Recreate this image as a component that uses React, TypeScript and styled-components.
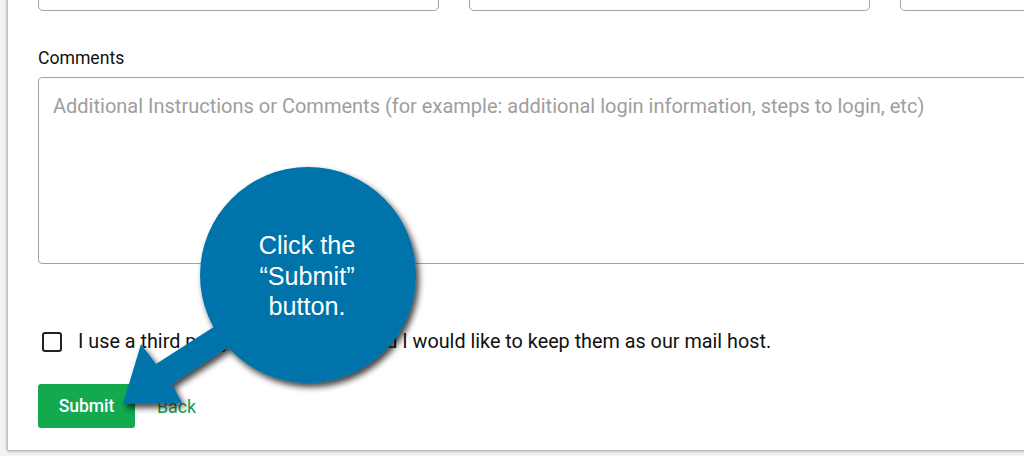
import styled, { createGlobalStyle } from "styled-components";

const GlobalStyle = createGlobalStyle`
  html, body {
    margin: 0;
    padding: 0;
    background: #f3f3f3;
  }
  body {
    font-family: Roboto, "Liberation Sans", Arial, sans-serif;
  }
`;

const PageStyled = styled.div`
  position: relative;
  width: 1024px;
  height: 456px;
  overflow: hidden;
`;

const CardStyled = styled.div`
  margin: -30px 0 0 8px;
  width: 1100px;
  padding: 0 0 22px 30px;
  box-sizing: border-box;
  background: #fff;
  box-shadow: -1px 1px 3px rgba(0, 0, 0, 0.35);
`;

const FieldRowStyled = styled.div`
  display: grid;
  grid-template-columns: 401px 401px 401px;
  column-gap: 30px;
`;

const InputStyled = styled.div`
  height: 41px;
  border: 1px solid #a3a3a3;
  border-radius: 5px;
  box-sizing: border-box;
`;

const LabelStyled = styled.div`
  margin-top: 36px;
  font-size: 17.6px;
  line-height: 22px;
  color: #111;
`;

const TextAreaStyled = styled.div`
  margin-top: 8px;
  height: 187px;
  border: 1px solid #a3a3a3;
  border-radius: 4px;
  box-sizing: border-box;
  padding: 15px 14px;
  font-size: 20px;
  line-height: 26px;
  color: #9e9e9e;
`;

const CheckRowStyled = styled.div`
  margin-top: 66px;
  display: flex;
  align-items: center;
  gap: 16px;
  padding-left: 4px;
  font-size: 19.8px;
  color: #111;
`;

const CheckBoxStyled = styled.span`
  width: 20px;
  height: 20px;
  border: 2.5px solid #222;
  border-radius: 3px;
  box-sizing: border-box;
`;

const ActionsStyled = styled.div`
  margin-top: 31px;
  display: flex;
  align-items: center;
  gap: 22px;
`;

const SubmitStyled = styled.button`
  width: 97px;
  height: 44px;
  border: none;
  border-radius: 3px;
  background: #12a94f;
  color: #fff;
  font-family: Roboto, "Liberation Sans", sans-serif;
  font-size: 17.5px;
  font-weight: 500;
`;

const BackStyled = styled.a`
  color: #14a04c;
  font-size: 17.8px;
  text-decoration: none;
`;

const CalloutStyled = styled.div`
  position: absolute;
  left: 0;
  top: 0;
  width: 1024px;
  height: 456px;
  pointer-events: none;
`;

const BubbleTextStyled = styled.div`
  position: absolute;
  left: 232px;
  top: 230px;
  width: 150px;
  text-align: center;
  font-family: "Liberation Sans", Arial, sans-serif;
  font-size: 25.2px;
  line-height: 30.5px;
  color: #fff;
`;

const Callout = () => (
  <CalloutStyled>
    <svg width="1024" height="456">
      <defs>
        <filter id="sh" x="-20%" y="-20%" width="150%" height="150%">
          <feGaussianBlur in="SourceAlpha" stdDeviation="3" />
          <feOffset dx="3" dy="4" result="b" />
          <feComponentTransfer>
            <feFuncA type="linear" slope="0.75" />
          </feComponentTransfer>
          <feMerge>
            <feMergeNode />
            <feMergeNode in="SourceGraphic" />
          </feMerge>
        </filter>
      </defs>
      <g filter="url(#sh)" fill="#0273ab">
        <polygon points="123,404 141,344 156,364 273,289 287,309 172,384 182,403" />
        <circle cx="308" cy="275" r="108" />
      </g>
    </svg>
    <BubbleTextStyled>
      Click the
      <br />
      “Submit”
      <br />
      button.
    </BubbleTextStyled>
  </CalloutStyled>
);

const App = () => {
  return (
    <PageStyled>
      <GlobalStyle />
      <CardStyled>
        <FieldRowStyled>
          <InputStyled />
          <InputStyled />
          <InputStyled />
        </FieldRowStyled>
        <LabelStyled>Comments</LabelStyled>
        <TextAreaStyled>
          Additional Instructions or Comments (for example: additional login information, steps to login, etc)
        </TextAreaStyled>
        <CheckRowStyled>
          <CheckBoxStyled />
          I use a third party email provider and I would like to keep them as our mail host.
        </CheckRowStyled>
        <ActionsStyled>
          <SubmitStyled>Submit</SubmitStyled>
          <BackStyled href="#">Back</BackStyled>
        </ActionsStyled>
      </CardStyled>
      <Callout />
    </PageStyled>
  );
};

export default App;
